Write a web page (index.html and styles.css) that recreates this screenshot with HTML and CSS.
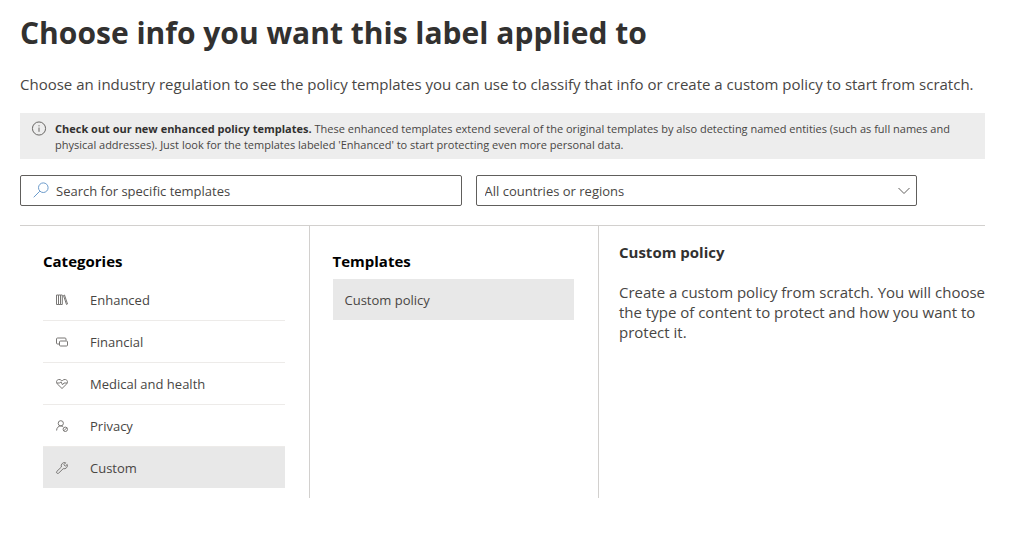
FILE: index.html
```html
<!DOCTYPE html>
<html lang="en">
<head>
<meta charset="UTF-8">
<title>Choose info you want this label applied to</title>
<link rel="stylesheet" href="styles.css">
</head>
<body>

<main class="page">
	<h1>Choose info you want this label applied to</h1>
	<p class="intro">Choose an industry regulation to see the policy templates you can use to classify that info or create a custom policy to start from scratch.</p>

	<div class="notice">
		<svg class="noticeIcon" viewBox="0 0 16 16" aria-hidden="true">
			<circle cx="8" cy="8" r="7" />
			<path d="M8 7v4.5M8 4.5v1.2" />
		</svg>
		<p><strong>Check out our new enhanced policy templates.</strong> These enhanced templates extend several of the original templates by also detecting named entities (such as full names and physical addresses). Just look for the templates labeled 'Enhanced' to start protecting even more personal data.</p>
	</div>

	<!-- search and region filter -->
	<form class="filters">
		<div class="field">
			<svg class="searchIcon" viewBox="0 0 16 16" aria-hidden="true">
				<circle cx="10.3" cy="5.7" r="4.8" />
				<path d="M6.8 9.2L0.7 15.3" />
			</svg>
			<input type="text" placeholder="Search for specific templates" aria-label="Search for specific templates">
		</div>
		<div class="field">
			<select aria-label="Country or region">
				<option>All countries or regions</option>
			</select>
			<svg class="chevron" viewBox="0 0 12 8" aria-hidden="true">
				<path d="M0.5 1L6 6.5L11.5 1" />
			</svg>
		</div>
	</form>

	<div class="columns">
		<section class="column">
			<h2>Categories</h2>
			<ul class="list">
				<li><button type="button" class="item">
					<svg viewBox="0 0 12 12" aria-hidden="true"><path d="M.5 1h2v9.500h-2zM2.500 1h2v9.500h-2zM4.500 1h1.800v9.500H4.500zM7.500 1.500l1-.5 3 9-1 .5z" /></svg>
					Enhanced
				</button></li>
				<li><button type="button" class="item">
					<svg viewBox="0 0 12 12" aria-hidden="true"><path d="M3.500 8H1.500Q.5 8 .5 7V3Q.5 2 1.500 2H9Q10 2 10 3V4.500M4.500 5H10.500Q11.500 5 11.500 6V9Q11.500 10 10.500 10H4.500Q3.500 10 3.500 9V6Q3.500 5 4.500 5z" /></svg>
					Financial
				</button></li>
				<li><button type="button" class="item">
					<svg viewBox="0 0 12 12" aria-hidden="true"><path d="M6 10.500L1.200 5.800C-.5 3.500 1.200 1.500 3 1.500 4.500 1.500 5.300 2.200 6 3 6.700 2.200 7.500 1.500 9 1.500 10.800 1.500 12.500 3.500 10.800 5.800zM.8 5H3.800L5 3.800 6.500 6.800 8 5H11.200" /></svg>
					Medical and health
				</button></li>
				<li><button type="button" class="item">
					<svg viewBox="0 0 12 12" aria-hidden="true"><circle cx="4.800" cy="3.300" r="2.600" /><path d="M.6 10.500C.6 7.800 2.500 5.900 4.800 5.900 5.800 5.900 6.500 6.200 7.200 6.800" /><circle cx="9.300" cy="9.300" r="2.200" /><path d="M7.800 10.800L10.800 7.800" /></svg>
					Privacy
				</button></li>
				<li><button type="button" class="item selected">
					<svg viewBox="0 0 12 12" aria-hidden="true"><path d="M9.700.8A3.300 3.300 0 0 0 5.400 5L.9 9.300A1.250 1.250 0 0 0 2.700 11.100L7.200 6.700A3.300 3.300 0 0 0 11.200 2.400L9.300 4.200 7.900 2.700z" /></svg>
					Custom
				</button></li>
			</ul>
		</section>

		<section class="column">
			<h2>Templates</h2>
			<ul class="list">
				<li><button type="button" class="item selected">Custom policy</button></li>
			</ul>
		</section>

		<section class="details">
			<h3>Custom policy</h3>
			<p>Create a custom policy from scratch. You will choose the type of content to protect and how you want to protect it.</p>
		</section>
	</div>
</main>

</body>
</html>
```
FILE: styles.css
```css
* {
	box-sizing: border-box;
}

body {
	margin: 0;
	background: #fff;
	color: #484644;
	font-family: "Open Sans", "Noto Sans", sans-serif;
	font-size: 13px;
}

h1, h2, h3, p, ul {
	margin: 0;
	padding: 0;
}

.page {
	padding: 12px 39px 48px 20px;
}

h1 {
	color: #323130;
	font-size: 30px;
	line-height: 42px;
}

.intro {
	margin-top: 20px;
	font-size: 15px;
	line-height: 21px;
}

/* info bar */
.notice {
	display: flex;
	gap: 8px;
	margin-top: 18px;
	padding: 8px 24px 6px 11px;
	background: #ededed;
	font-size: 11px;
	line-height: 16px;
}

.notice strong {
	color: #323130;
}

.noticeIcon {
	flex: none;
	width: 16px;
	height: 15px;
}

svg {
	fill: none;
	stroke: #605e5c;
}

/* filters */
.filters {
	display: grid;
	grid-template-columns: 1fr 1fr;
	gap: 14px;
	margin-top: 16px;
	padding-right: 68px;
}

.field {
	position: relative;
}

.field input,
.field select {
	display: block;
	width: 100%;
	height: 31px;
	padding: 0 8px;
	border: 1px solid #605e5c;
	border-radius: 2px;
	background: #fff;
	color: #484644;
	font: inherit;
	appearance: none;
}

.field input {
	padding-left: 35px;
}

.field input::placeholder {
	color: #484644;
}

.searchIcon {
	position: absolute;
	top: 7px;
	left: 13px;
	width: 16px;
	height: 16px;
	stroke: #6c9bcb;
}

.chevron {
	position: absolute;
	top: 12px;
	right: 7px;
	width: 12px;
	height: 8px;
	pointer-events: none;
}

/* columns */
.columns {
	display: grid;
	grid-template-columns: 30% 30% 40%;
	margin-top: 19px;
	border-top: 1px solid #d2d0ce;
}

.column {
	padding: 25px 24px 10px 23px;
	border-right: 1px solid #d2d0ce;
}

h2, h3 {
	font-size: 15px;
	line-height: 20px;
}

h2 {
	color: #000;
}

h3 {
	color: #323130;
}

.list {
	margin-top: 8px;
	list-style: none;
}

.list li + li {
	border-top: 1px solid #edebe9;
}

.item {
	display: flex;
	align-items: center;
	gap: 21px;
	width: 100%;
	height: 41px;
	padding: 0 12px;
	border: 0;
	background: none;
	color: #484644;
	font: inherit;
	text-align: left;
	cursor: pointer;
}

.item svg {
	width: 14px;
	height: 12px;
	stroke: #797775;
}

.item.selected {
	background: #e8e8e8;
}

.details {
	margin-right: -8px;
	padding: 16px 0 0 20px;
}

.details p {
	margin-top: 20px;
	font-size: 15px;
	line-height: 20px;
}
```
